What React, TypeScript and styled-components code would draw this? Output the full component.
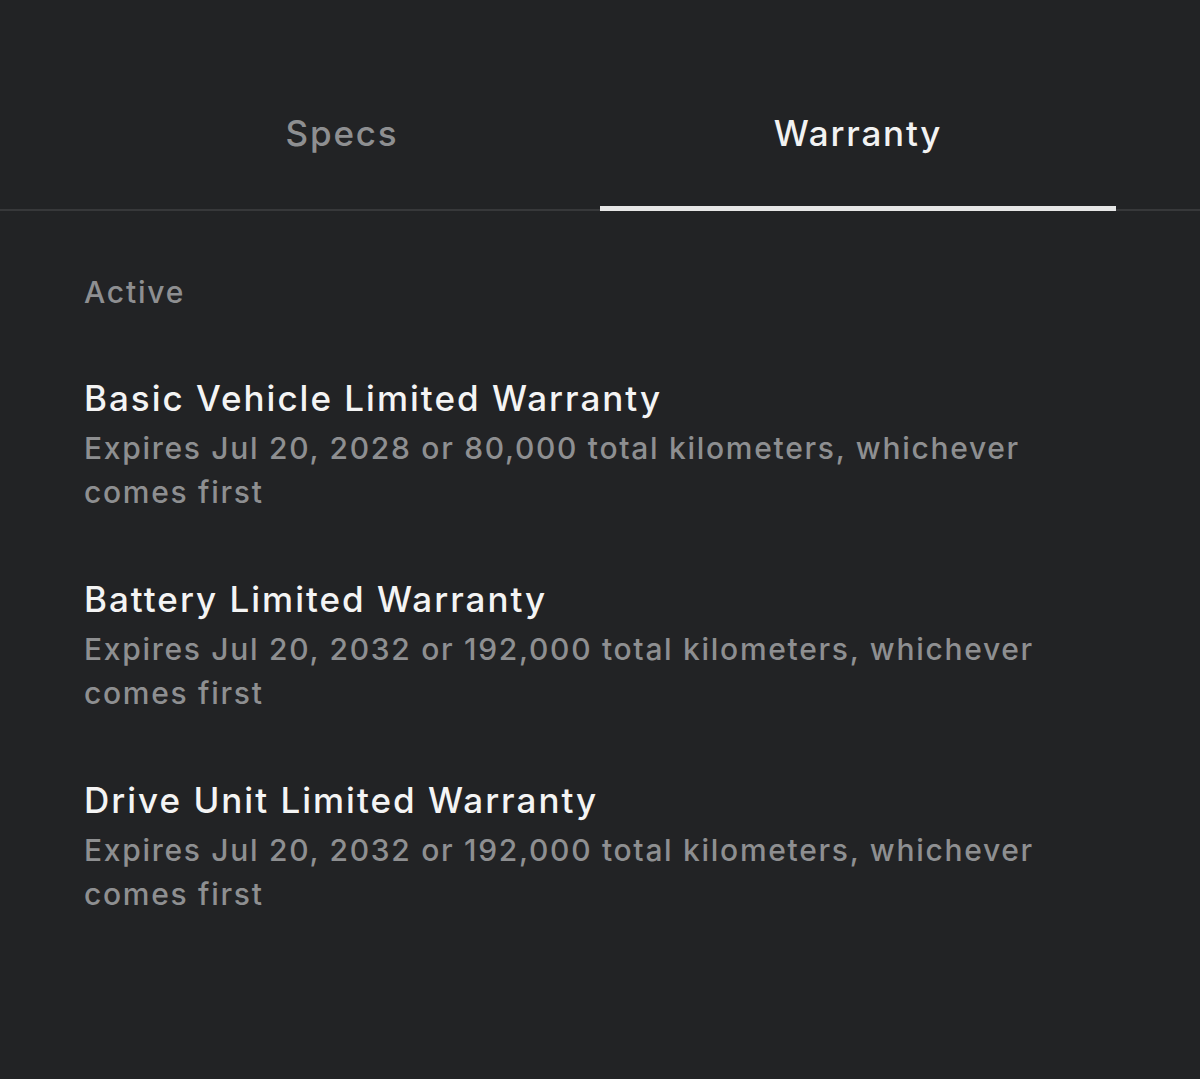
import React from 'react'
import styled, { createGlobalStyle } from 'styled-components'

const GlobalStyle = createGlobalStyle`
	html, body {
		margin: 0;
		padding: 0;
		background: #222325;
	}
	body {
		font-family: Inter, "Noto Sans", "Liberation Sans", sans-serif;
		-webkit-font-smoothing: antialiased;
	}
`

const Page = styled.div`
	width: 1200px;
	height: 1079px;
	background: #222325;
	overflow: hidden;
`

const TabBar = styled.div`
	display: flex;
	padding: 0 84px;
	border-bottom: 2px solid #37383a;
`

interface TabProps {
	active: boolean
}
const Tab = styled.div<TabProps>`
	flex: 1;
	height: 211px;
	display: flex;
	align-items: flex-start;
	justify-content: center;
	padding-top: 112px;
	box-sizing: border-box;
	font-size: 35px;
	font-weight: 500;
	letter-spacing: 1.8px;
	color: ${({active}) => active ? '#f2f2f2' : '#8e8f91'};
	border-bottom: 5px solid ${({active}) => active ? '#e6e6e6' : 'transparent'};
	margin-bottom: -2px;
`

const Content = styled.div`
	padding: 63px 84px 0;
`

const SectionLabel = styled.div`
	font-size: 30px;
	font-weight: 500;
	letter-spacing: 1.8px;
	color: #8e8f91;
	margin-bottom: 66px;
`

const List = styled.div`
	display: flex;
	flex-direction: column;
	gap: 63px;
`

const Item = styled.div`
	display: flex;
	flex-direction: column;
`

const ItemTitle = styled.div`
	font-size: 35px;
	font-weight: 500;
	letter-spacing: 2px;
	color: #f4f4f4;
	line-height: 44px;
	margin-bottom: 6px;
`

const ItemText = styled.div`
	font-size: 30px;
	font-weight: 500;
	letter-spacing: 1.7px;
	color: #8e8f91;
	line-height: 44px;
	max-width: 980px;
`

const warranties = [
	{ title: 'Basic Vehicle Limited Warranty', text: 'Expires Jul 20, 2028 or 80,000 total kilometers, whichever comes first' },
	{ title: 'Battery Limited Warranty', text: 'Expires Jul 20, 2032 or 192,000 total kilometers, whichever comes first' },
	{ title: 'Drive Unit Limited Warranty', text: 'Expires Jul 20, 2032 or 192,000 total kilometers, whichever comes first' },
]

export default function App() {
	return (
		<Page>
			<GlobalStyle />
			<TabBar>
				<Tab active={false}>Specs</Tab>
				<Tab active={true}>Warranty</Tab>
			</TabBar>
			<Content>
				<SectionLabel>Active</SectionLabel>
				<List>
					{warranties.map((w, k) => (
						<Item key={k}>
							<ItemTitle>{w.title}</ItemTitle>
							<ItemText>{w.text}</ItemText>
						</Item>
					))}
				</List>
			</Content>
		</Page>
	)
}
